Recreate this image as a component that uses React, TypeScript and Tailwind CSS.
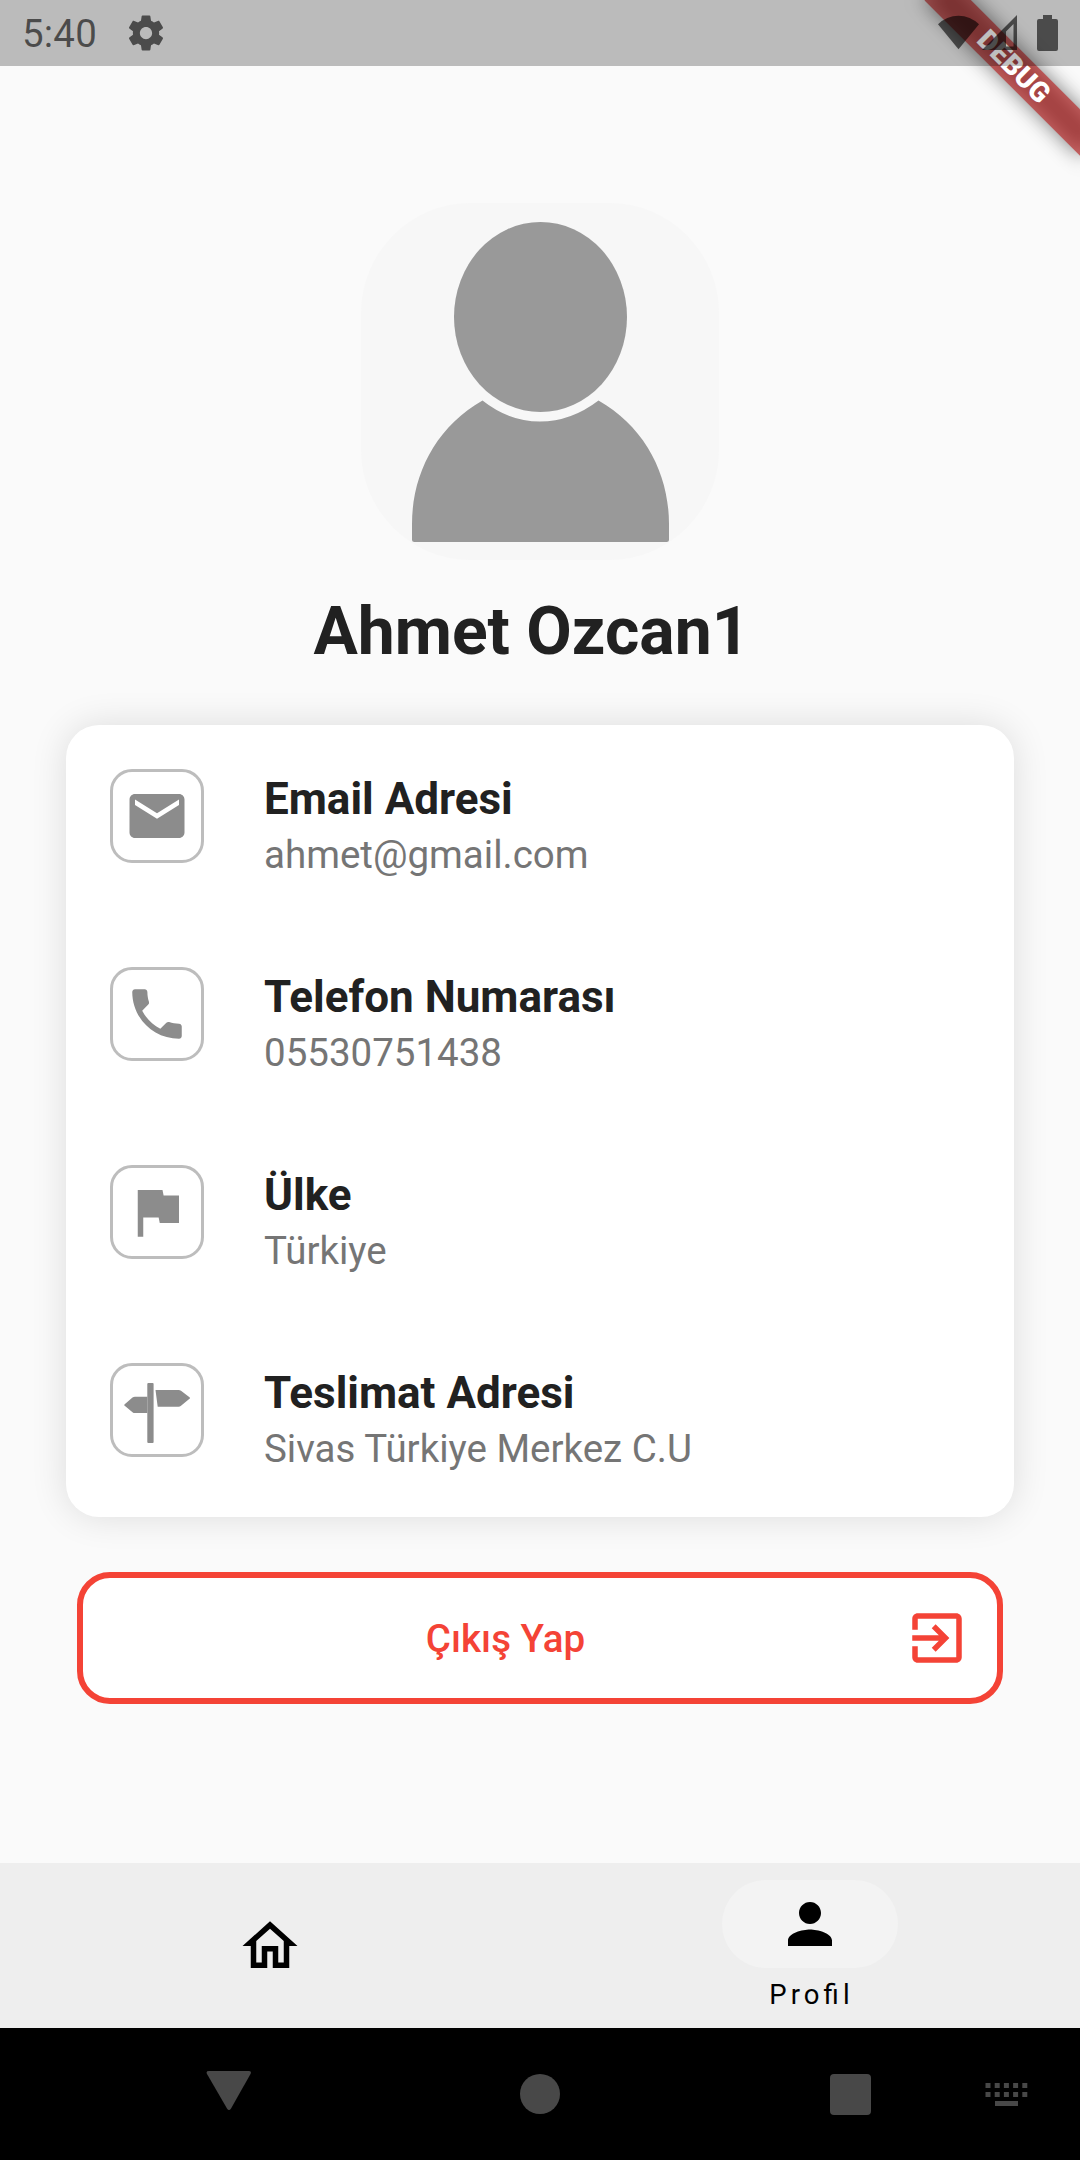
import type { ReactNode } from 'react';

const PATHS = {
  mail: 'M20 4H4c-1.1 0-1.99.9-1.99 2L2 18c0 1.1.9 2 2 2h16c1.1 0 2-.9 2-2V6c0-1.1-.9-2-2-2zm0 4l-8 5-8-5V6l8 5 8-5v2z',
  phone:
    'M6.62 10.79c1.44 2.83 3.76 5.14 6.59 6.59l2.2-2.2c.27-.27.67-.36 1.02-.24 1.12.37 2.33.57 3.57.57.55 0 1 .45 1 1V20c0 .55-.45 1-1 1-9.39 0-17-7.61-17-17 0-.55.45-1 1-1h3.5c.55 0 1 .45 1 1 0 1.25.2 2.45.57 3.57.11.35.03.74-.25 1.02l-2.2 2.2z',
  flag: 'M14.4 6L14 4H5v17h2v-7h5.6l.4 2h7V6z',
  home: 'M12 5.69l5 4.5V18h-2v-6H9v6H7v-7.81l5-4.5M12 3L2 12h3v8h6v-6h2v6h6v-8h3L12 3z',
  person:
    'M12 12c2.21 0 4-1.79 4-4s-1.79-4-4-4-4 1.79-4 4 1.79 4 4 4zm0 2c-2.67 0-8 1.34-8 4v2h16v-2c0-2.66-5.33-4-8-4z',
  exit: 'M10.09 15.59L11.5 17l5-5-5-5-1.41 1.41L12.67 11H3v2h9.67l-2.58 2.59zM19 3H5c-1.11 0-2 .9-2 2v4h2V5h14v14H5v-4H3v4c0 1.1.89 2 2 2h14c1.1 0 2-.9 2-2V5c0-1.1-.9-2-2-2z',
  gear: 'M19.43 12.98c.04-.32.07-.64.07-.98s-.03-.66-.07-.98l2.11-1.65c.19-.15.24-.42.12-.64l-2-3.46c-.12-.22-.39-.3-.61-.22l-2.49 1c-.52-.4-1.08-.73-1.69-.98l-.38-2.65C14.46 2.18 14.25 2 14 2h-4c-.25 0-.46.18-.49.42l-.38 2.65c-.61.25-1.17.59-1.69.98l-2.49-1c-.23-.09-.49 0-.61.22l-2 3.46c-.13.22-.07.49.12.64l2.11 1.65c-.04.32-.07.65-.07.98s.03.66.07.98l-2.11 1.65c-.19.15-.24.42-.12.64l2 3.46c.12.22.39.3.61.22l2.49-1c.52.4 1.08.73 1.69.98l.38 2.65c.03.24.24.42.49.42h4c.25 0 .46-.18.49-.42l.38-2.65c.61-.25 1.17-.59 1.69-.98l2.49 1c.23.09.49 0 .61-.22l2-3.46c.12-.22.07-.49-.12-.64l-2.11-1.65zM12 15.5c-1.93 0-3.5-1.57-3.5-3.5s1.57-3.5 3.5-3.5 3.5 1.57 3.5 3.5-1.57 3.5-3.5 3.5z',
};

function Icon({ name, className }: { name: keyof typeof PATHS; className: string }) {
  return (
    <svg viewBox="0 0 24 24" fill="currentColor" className={className}>
      <path d={PATHS[name]} />
    </svg>
  );
}

function SignpostIcon() {
  return (
    <svg viewBox="0 0 66 66" fill="currentColor" className="size-[66px] shrink-0">
      <rect x="23.3" y="6" width="6.3" height="60" rx="1" />
      <path d="M31.5 13H54.5q1.5 0 2.5.8L65.5 20.2q1 .8 0 1.6L57 28.8q-1 .9-2.5.9H33.7Z" />
      <path d="M23.3 19.7H11q-1.5 0-2.5.9L.7 27.2q-1 .8 0 1.6L8.5 35.2q1 .9 2.5.9H23.3Z" />
    </svg>
  );
}

function DebugBanner() {
  return (
    <div className="absolute right-0 top-0 z-10 size-[260px] overflow-hidden">
      <div className="absolute left-[84px] top-[49.5px] h-[33px] w-[220px] rotate-45 bg-black/50 blur-[10px]" />
      <div className="absolute left-[84px] top-[49.5px] flex h-[33px] w-[220px] rotate-45 items-center justify-center bg-[#b71c1c]/63 text-[28px] leading-none font-black text-white">
        DEBUG
      </div>
    </div>
  );
}

function StatusBar() {
  return (
    <header className="relative z-20 flex h-[66px] items-center bg-black/25 pl-[22px] text-black/60">
      <span className="w-[103px] pt-[3px] text-[38.5px] leading-none tracking-[0.2px]">5:40</span>
      <Icon name="gear" className="size-[42px]" />
      <svg viewBox="0 0 130 66" fill="currentColor" className="ml-auto mr-[16px] h-[66px] w-[130px]">
        <path d="M4 24.3A29 29 0 0 1 45 24.3L24.5 49.3Z" />
        <path fillRule="evenodd" d="M48 50L83 15V50ZM72 46.5H79.5V24L72 31.5Z" />
        <path d="M109 15h9v4h4q2 0 2 2v28q0 2-2 2h-17q-2 0-2-2V21q0-2 2-2h4Z" />
      </svg>
    </header>
  );
}

function InfoRow({ icon, title, value }: { icon: ReactNode; title: string; value: string }) {
  return (
    <div className="flex h-[198px] pl-[44px] pt-[44px]">
      <div className="flex size-[94px] items-center justify-center rounded-[22px] border-[3px] border-[#bdbdbd] text-[#8c8c8c]">
        {icon}
      </div>
      <div className="ml-[60px] pt-[4px]">
        <div className="text-[44px] leading-[52px] font-bold text-[#212121]">{title}</div>
        <div className="mt-[2px] text-[38.5px] leading-[56px] text-[#757575]">{value}</div>
      </div>
    </div>
  );
}

const rowIcon = 'size-[66px] shrink-0';

export default function App() {
  return (
    <div className="relative flex h-[2160px] w-[1080px] flex-col overflow-hidden bg-[#fafafa] font-['Roboto',sans-serif]">
      <StatusBar />
      <DebugBanner />

      <main className="flex flex-1 flex-col">
        <div className="mx-auto mt-[137px] h-[357px] w-[358px] overflow-hidden rounded-[110px] bg-[#f7f7f7]">
          <svg viewBox="0 0 358 357" fill="#999999" className="h-full w-full">
            <ellipse cx="179.5" cy="114" rx="86.5" ry="95" />
            <path d="M121.5 197.5Q148 218.5 179 218.5T237.5 197.5C284 224 308 271 308 321V336.5Q308 339 305.5 339H53.5Q51 339 51 336.5V321C51 271 75 224 121.5 197.5Z" />
          </svg>
        </div>

        <h1 className="mt-[33px] mr-[17px] text-center text-[66px] leading-[78px] font-bold text-[#212121]">
          Ahmet Ozcan1
        </h1>

        <section className="mx-[66px] mt-[54px] rounded-[33px] bg-white shadow-[0_0_36px_rgba(0,0,0,0.12)]">
          <InfoRow icon={<Icon name="mail" className={rowIcon} />} title="Email Adresi" value="ahmet@gmail.com" />
          <InfoRow icon={<Icon name="phone" className={rowIcon} />} title="Telefon Numarası" value="05530751438" />
          <InfoRow icon={<Icon name="flag" className={rowIcon} />} title="Ülke" value="Türkiye" />
          <InfoRow icon={<SignpostIcon />} title="Teslimat Adresi" value="Sivas Türkiye Merkez C.U" />
        </section>

        <button className="mx-[77px] mt-[55px] flex h-[132px] items-center rounded-[33px] border-[6px] border-[#f44336] bg-white pr-[27px] text-[#f44336]">
          <span className="ml-[24px] flex-1 pt-[2px] text-center text-[38.5px] leading-none font-medium">Çıkış Yap</span>
          <Icon name="exit" className="size-[66px]" />
        </button>
      </main>

      <nav className="grid h-[165px] grid-cols-2 bg-[#eeeeee] text-black">
        <div className="flex items-center justify-center">
          <Icon name="home" className="size-[66px]" />
        </div>
        <div className="flex flex-col items-center pt-[17px]">
          <div className="flex h-[88px] w-[176px] items-center justify-center rounded-full bg-[#f3f3f3]">
            <Icon name="person" className="size-[66px]" />
          </div>
          <span className="mt-[11px] pl-[3px] text-[27.5px] leading-[32px] tracking-[4.1px] [font-feature-settings:'liga'_1]">
            Profil
          </span>
        </div>
      </nav>

      <footer className="flex h-[132px] items-center bg-black pl-[206px] text-[#484848]">
        <svg viewBox="0 0 46 39" fill="currentColor" className="mt-[43px] h-[39px] w-[46px] self-start">
          <path d="M3 0H42.5q3.5 0 2 3L25 37.5q-2 3-4 0L1 3Q-.5 0 3 0Z" />
        </svg>
        <div className="ml-[268px] size-[40px] rounded-full bg-current" />
        <div className="ml-[270px] size-[41px] rounded-[4px] bg-current" />
        <svg viewBox="0 0 44 24" fill="currentColor" className="ml-[114px] h-[24px] w-[44px]">
          {[0, 1, 2, 3, 4].map((i) => (
            <g key={i}>
              <rect x={0.5 + i * 9.2} y="1" width="5" height="5" />
              <rect x={0.5 + i * 9.2} y="10" width="5" height="5" />
            </g>
          ))}
          <rect x="10" y="19" width="23" height="5" />
        </svg>
      </footer>
    </div>
  );
}
